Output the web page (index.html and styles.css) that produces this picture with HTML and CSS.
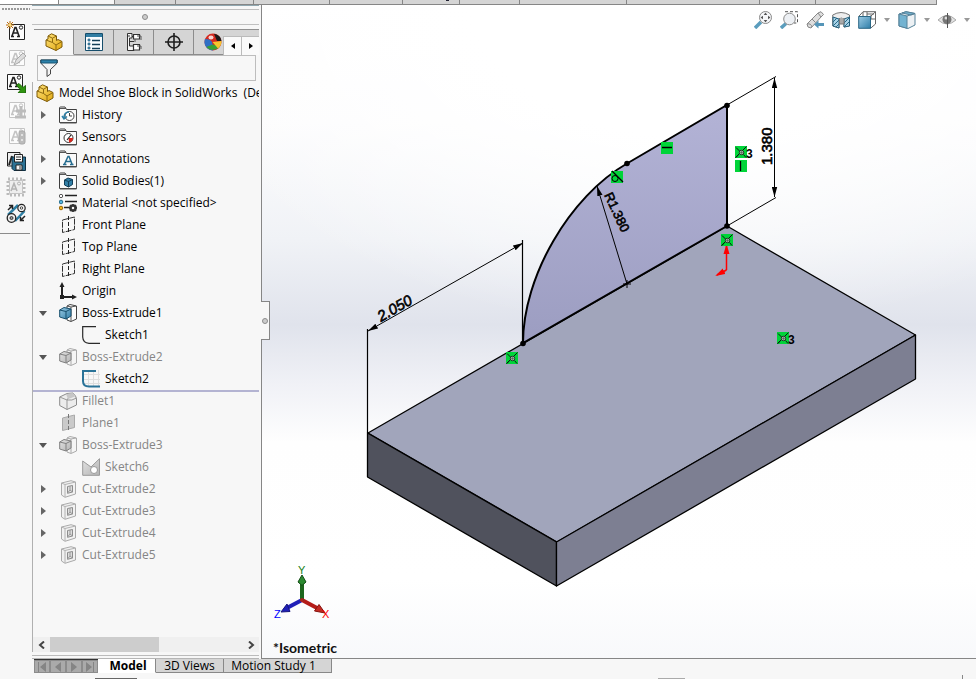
FILE: index.html
```html
<!DOCTYPE html>
<html lang="en">
<head>
<meta charset="utf-8">
<title>Model Shoe Block in SolidWorks</title>
<link rel="stylesheet" href="styles.css">
</head>
<body>
<svg class="defs" aria-hidden="true">
  <defs>
    <linearGradient id="yel" x2="1" y2="1"><stop stop-color="#ffe27a"/><stop offset="1" stop-color="#e0a810"/></linearGradient>
    <linearGradient id="blu" x2="1" y2="1"><stop stop-color="#9ccbe4"/><stop offset="1" stop-color="#2f7ea8"/></linearGradient>
    <linearGradient id="gry" x2="1" y2="1"><stop stop-color="#e2e2e2"/><stop offset="1" stop-color="#b4b4b4"/></linearGradient>
    <symbol id="part" viewBox="0 0 18 18">
      <path d="M1 7V13L11 17.500L17 14V8.500L13 6.500L11.500 7.500V3L6.500 .8L3 3V6Z" fill="url(#yel)" stroke="#7c5a08"/>
      <path d="M1 7L7.500 9.500L11 12L17 8.500M11 12V17.500M3 3L7.500 5.200L11.500 3M7.500 5.200V9.500" fill="none" stroke="#8e6a10"/>
    </symbol>
    <symbol id="folder" viewBox="0 0 18 18"><path d="M.5 16.500V2Q.5 1 1.500 1H6L7.500 3.500H17.500V16.500Z" fill="#fafafa" stroke="#3e3e3e"/><path d="M1 2.500H7M17.500 4V17H1" stroke="#555" fill="none"/></symbol>
    <symbol id="plane" viewBox="0 0 18 18"><path d="M3.500 4L15.500 1V13.500L3.500 16.500Z" fill="none" stroke="#333" stroke-dasharray="6 1"/><path d="M9.500 0V18" stroke="#222" stroke-dasharray="4 2"/></symbol>
    <symbol id="boss" viewBox="0 0 18 18"><path d="M8 2L11 .5L17.500 2V15L12 17.500L8 16Z" fill="#fcfcfc" stroke="#444"/><path d="M12 3V17M12 3L17 2M12 3L8 2" stroke="#555" fill="none"/><path d="M.7 6L5 3.500L12 5V12L7 15L.7 13Z" fill="url(#blu)" stroke="#174f6d"/><path d="M.7 6L7 7.500L12 5M7 7.500V15" stroke="#174f6d" fill="none"/></symbol>
    <symbol id="bossg" viewBox="0 0 18 18"><path d="M8 2L11 .5L17.500 2V15L12 17.500L8 16Z" fill="#f5f5f5" stroke="#aaa"/><path d="M12 3V17M12 3L17 2M12 3L8 2" stroke="#aaa" fill="none"/><path d="M.7 6L5 3.500L12 5V12L7 15L.7 13Z" fill="url(#gry)" stroke="#808080"/><path d="M.7 6L7 7.500L12 5M7 7.500V15" stroke="#808080" fill="none"/></symbol>
    <symbol id="cut" viewBox="0 0 18 18"><path d="M2.500 3L12 .7L16.500 2V14L6 17.300L2.500 15Z" fill="#f1f1f1" stroke="#aaa"/><path d="M2.500 3L6 4.500V17M6 4.500L16.500 2" fill="none" stroke="#b2b2b2"/><path d="M8.500 6.500L13.500 5.500V12L8.500 13.300Z" fill="#ddd" stroke="#8c8c8c"/><path d="M11 6V10L8.500 13M11 10L13.500 12" fill="none" stroke="#999"/></symbol>
    <symbol id="note" viewBox="0 0 20 20"><path d="M3.500 3.500H18.500V18.500H3.500Z" fill="#fcfcfc" stroke="currentColor"/><path d="M6 15L9 6.500H10L13 15M7 12H12M5 15.500H8M11 15.500H14" fill="none" stroke="currentColor" stroke-width="1.600"/><circle cx="15" cy="6.500" r="1.700" fill="none" stroke="currentColor"/></symbol>
    <symbol id="coin" viewBox="0 0 12 12"><path d="M0 0H12V12H0Z" fill="#00d438"/><path d="M.5 11.500L11.500 .5M1 1.500L5 5.500M8.500 8.500L11 11.500M4 8L1 11.500" stroke="#111" stroke-width="1"/><circle cx="6.500" cy="6.500" r="2.200" fill="#bfeec8" stroke="#222"/><path d="M6.500 5V8M5 6.500H8" stroke="#555" stroke-width=".7"/></symbol>
    <marker id="arr" viewBox="0 0 10 6" refX="10" refY="3" markerWidth="10" markerHeight="6" markerUnits="userSpaceOnUse" orient="auto-start-reverse"><path d="M0 .3L10 3L0 5.700Z"/></marker>
    <marker id="rarr" viewBox="0 0 10 6" refX="8" refY="3" markerWidth="10" markerHeight="7" markerUnits="userSpaceOnUse" orient="auto"><path d="M0 0L10 3L0 6Z" fill="#f00"/></marker>
  </defs>
</svg>

<div class="ribbon"><i class="w59 white"></i><i class="w56 light"></i><i class="w61"></i><i class="w78"></i><i class="w76"></i><i class="w73"></i><i class="w57 mark"></i><i class="w60"></i><i class="w107"></i><i class="w133"></i><i class="w56"></i><i class="w121"></i></div>

<main class="work">
  <aside class="annobar">
    <div class="grip"></div>
    <button aria-label="New note"><svg viewBox="0 0 20 20"><use href="#note"/><path d="M4 0V8M0 4H8M1 1L7 7M7 1L1 7" stroke="#b86a0c"/><circle cx="4" cy="4" r="1.500" fill="#ffdb70"/></svg></button>
    <button class="off" aria-label="Edit note"><svg viewBox="0 0 20 20"><use href="#note"/><path d="M8 18L10 13L17 6L20 9L12 16Z" fill="#ddd" stroke="#aaa"/></svg></button>
    <button aria-label="Insert note"><svg viewBox="0 0 20 20"><use href="#note" x="-2" y="-2"/><path d="M10.500 12L13 10.500L17 14.500L19.500 12.500V20H12L14.500 17Z" fill="#2f9410" stroke="#256f10"/></svg></button>
    <button class="off" aria-label="Add note"><svg viewBox="0 0 20 20"><use href="#note"/><path d="M15 7V17M10 12H20M9 18H20" stroke="#bcbcbc" stroke-width="3"/></svg></button>
    <button class="off" aria-label="Lock note"><svg viewBox="0 0 20 20"><use href="#note"/><rect x="13" y="6" width="6" height="13" rx="2" fill="#bbb" stroke="#aaa"/><circle cx="16" cy="10" r="1" fill="#eee"/><circle cx="16" cy="15" r="1" fill="#eee"/></svg></button>
    <button aria-label="Save note"><svg viewBox="0 0 20 20"><path d="M1.500 1.500H14V15H1.500Z" fill="#eee" stroke="#222"/><path d="M3 14L6 5" stroke="#222" stroke-width="2"/><path d="M6 6H19.500V19.500H8L6 17.500Z" fill="#2d7294" stroke="#102f41"/><path d="M8.500 3.500H16.500V11H8.500ZM10 14H16V19H10Z" fill="#f5f5f5" stroke="#222"/><path d="M10 6H15M10 8.500H15M14 15V18" stroke="#333"/></svg></button>
    <button class="off" aria-label="Select note"><svg viewBox="0 0 20 20"><path d="M2 2H18V18H2Z" fill="none" stroke="#bbb" stroke-width="3" stroke-dasharray="2 2"/><path d="M3.500 3.500H16.500V16.500H3.500Z" fill="#eee" stroke="#c4c4c4"/><path d="M5 14L8 6.500L11 14M6 12H10" fill="none" stroke="#b4b4b4" stroke-width="1.600"/><circle cx="13" cy="6.500" r="1.500" fill="none" stroke="#b4b4b4"/></svg></button>
    <button aria-label="Belt and chain"><svg viewBox="0 0 20 20"><path d="M2 12L12 2M9 18L18.500 8" stroke="#2e7fa4" stroke-width="2.500"/><circle cx="5.500" cy="15" r="4.300" fill="#eee" stroke="#222" stroke-width="1.300"/><circle cx="5.500" cy="15" r="1.500" fill="#999" stroke="#333"/><circle cx="15.500" cy="5" r="3.700" fill="#eee" stroke="#222" stroke-width="1.200"/><circle cx="15.500" cy="5" r="1.200" fill="#fff" stroke="#444"/><path d="M2 7L6 3M3 2.500H6.500V6M19 13L15 17M14.500 14V17.500H18" fill="none" stroke="#222" stroke-width="1.500"/></svg></button>
    <hr>
  </aside>

  <section class="panel">
    <div class="handle"><span class="knob"></span></div>
    <div class="ptabs">
      <button class="ptab on" aria-label="Feature tree"><svg viewBox="0 0 18 18"><use href="#part"/></svg></button>
      <button class="ptab" aria-label="Properties"><svg viewBox="0 0 18 18"><path d="M.5 .5H17.500V17.500H.5Z" fill="#f9fcff" stroke="#174e6c"/><path d="M1 1H17V4H1Z" fill="#317da3"/><path d="M3 6H5V8H3ZM3 10H5V12H3ZM3 14H5V16H3Z" fill="#5aa6cb" stroke="#174e6c" stroke-width=".6"/><path d="M7 7.500H15M7 11.500H15M7 15.500H15" stroke="#123e57" stroke-width="1.500"/></svg></button>
      <button class="ptab" aria-label="Configurations"><svg viewBox="0 0 18 18"><path d="M2.500 .5H7V5H4.500V13H9V17.500H2.500Z" fill="#f6f6f6" stroke="#333"/><path d="M2.500 3H5M5 8.500H9M9 3.500H7" stroke="#333"/><path d="M8.500 1.500H14.500V6H8.500ZM8.500 11.500H14.500V17H8.500Z" fill="#fff" stroke="#333" stroke-width="1.200"/><path d="M10 6V9M12 3H16V7M12 13H16V16" fill="none" stroke="#555"/></svg></button>
      <button class="ptab" aria-label="Dimension expert"><svg viewBox="0 0 18 18"><circle cx="9" cy="9" r="6" fill="none" stroke="#1e1e1e" stroke-width="1.600"/><path d="M9 0V18M0 9H18" stroke="#1e1e1e" stroke-width="1.600"/></svg></button>
      <button class="ptab app" aria-label="Appearances"><svg viewBox="0 0 18 18"><circle cx="9" cy="9" r="8.500" fill="#d52a20"/><path d="M1 6Q8 6 8.500 11L9 17.500A8.500 8.500 0 0 1 1 6Z" fill="#2f6fc5"/><path d="M2.500 14L8.500 11.500L16 13A8.500 8.500 0 0 1 2.500 14Z" fill="#38a034"/><path d="M8.500 9L17.500 8Q17.500 13 14 15.500Z" fill="#f5c52d"/><path d="M10 .7Q17 2 17.500 8L13 8Z" fill="#1b1b1b"/><ellipse cx="7" cy="4.500" rx="2.500" ry="2" fill="#fff" opacity=".8"/></svg></button>
      <div class="pscroll"><button aria-label="Previous tabs"><svg viewBox="0 0 6 8"><path d="M5 1V7L1 4Z"/></svg></button><button aria-label="Next tabs"><svg viewBox="0 0 6 8"><path d="M1 1V7L5 4Z"/></svg></button></div>
    </div>
    <label class="filter"><svg viewBox="0 0 18 18"><path d="M.7 1V4L7 10.500V17.500L10.500 15V10.500L17.300 4V1Z" fill="#f3f3f3" stroke="#444"/><path d="M1 1H17V4H1Z" fill="#2d82aa" stroke="#195572"/></svg><input aria-label="Filter tree"></label>

    <ul class="tree">
      <li class="root"><svg viewBox="0 0 18 18"><use href="#part"/></svg><span>Model Shoe Block in SolidWorks&nbsp; (Default)</span></li>
      <li><button class="tw" aria-label="Expand"></button><svg viewBox="0 0 18 18"><use href="#folder"/><circle cx="10.500" cy="10" r="4.500" fill="#fff" stroke="#444"/><path d="M10.500 7V10H13" fill="none" stroke="#444"/><path d="M5 12Q5 6 10 6M3 10L5 13L8 10.500" fill="none" stroke="#2c7fa6" stroke-width="1.500"/></svg><span>History</span></li>
      <li><i class="tw"></i><svg viewBox="0 0 18 18"><use href="#folder"/><circle cx="9.500" cy="10" r="4.500" fill="#fff" stroke="#333"/><path d="M9.500 10L14 10A4.500 4.500 0 0 1 10 14.500Z" fill="#d8261c"/><path d="M8 12L12 7" stroke="#222" stroke-width="1.200"/></svg><span>Sensors</span></li>
      <li><button class="tw" aria-label="Expand"></button><svg viewBox="0 0 18 18"><use href="#folder"/><path d="M5.500 14L9 6.500H10L13 14M7 11.500H11.500M4 14.500H7.500M11 14.500H14.500" fill="none" stroke="#266d90" stroke-width="1.500"/></svg><span>Annotations</span></li>
      <li><button class="tw" aria-label="Expand"></button><svg viewBox="0 0 18 18"><use href="#folder"/><path d="M5.500 8L9 6L13.500 7.500V12.500L9.500 15L5.500 13Z" fill="#317fa7" stroke="#123f59"/><path d="M5.500 8L9.500 9.500L13.500 7.500M9.500 9.500V15" fill="none" stroke="#123f59"/></svg><span>Solid Bodies(1)</span></li>
      <li><i class="tw"></i><svg viewBox="0 0 18 18"><path d="M6 1.500H18M6 7.500H18M5 13.500H18" stroke="#222" stroke-width="1.600"/><circle cx="2" cy="2" r="1.700" fill="#fff" stroke="#555"/><circle cx="2" cy="8" r="1.800" fill="#54b4df" stroke="#246d8c"/><circle cx="2" cy="14" r="1.800" fill="#f1b41a" stroke="#98660a"/><circle cx="14" cy="14" r="2.500" fill="#f7f7f7" stroke="#333" stroke-width="2.500"/><path d="M14 10V12M14 16V18M10 14H12M16 14H18M11 11L12 12M16 16L17 17M17 11L16 12M12 16L11 17" stroke="#333" stroke-width="1.500"/></svg><span>Material &lt;not specified&gt;</span></li>
      <li><i class="tw"></i><svg viewBox="0 0 18 18"><use href="#plane"/></svg><span>Front Plane</span></li>
      <li><i class="tw"></i><svg viewBox="0 0 18 18"><use href="#plane"/></svg><span>Top Plane</span></li>
      <li><i class="tw"></i><svg viewBox="0 0 18 18"><use href="#plane"/></svg><span>Right Plane</span></li>
      <li><i class="tw"></i><svg viewBox="0 0 18 18"><path d="M3 3V15H15" fill="none" stroke="#222" stroke-width="2"/><path d="M3 0L.5 5H5.500ZM18 15L13 12.500V17.500ZM1 13H5V17H1Z" fill="#222"/></svg><span>Origin</span></li>
      <li><button class="tw open" aria-label="Collapse"></button><svg viewBox="0 0 18 18"><use href="#boss"/></svg><span>Boss-Extrude1</span></li>
      <li class="sub"><svg viewBox="0 0 18 18"><path d="M14 .7H.7V11Q1 17 7 17.300H18" fill="none" stroke="#2a2a2a" stroke-width="1.200"/></svg><span>Sketch1</span></li>
      <li class="dim"><button class="tw open" aria-label="Collapse"></button><svg viewBox="0 0 18 18"><use href="#bossg"/></svg><span>Boss-Extrude2</span></li>
      <li class="sub"><svg viewBox="0 0 18 18"><path d="M6.500 0V17M11.500 0V17M16.500 0V17M1 4.500H18M1 9.500H18M1 13.500H18" stroke="#dedede"/><path d="M14 1H1V11Q1 16.500 7 16.500H18" fill="none" stroke="#2a7398" stroke-width="2"/></svg><span>Sketch2</span></li>
      <li class="dim rollback"><i class="tw"></i><svg viewBox="0 0 18 18"><path d="M.7 5L8 1.500L14 1Q17 3 17.500 7V13L8 17.500L.7 13.500Z" fill="#ececec" stroke="#8c8c8c"/><path d="M.7 5L8 8V17.500M8 8Q10 4 14 1M8 8Q13 9 17.500 6" fill="none" stroke="#999"/><path d="M7 2L14 1L17 4L12 6L9 7Z" fill="#c7c7c7"/></svg><span>Fillet1</span></li>
      <li class="dim"><i class="tw"></i><svg viewBox="0 0 18 18"><path d="M3.500 4L15.500 1V13.500L3.500 16.500Z" fill="#cacaca" stroke="#aaa"/><path d="M9.500 0V18" stroke="#777" stroke-dasharray="4 2"/></svg><span>Plane1</span></li>
      <li class="dim"><button class="tw open" aria-label="Collapse"></button><svg viewBox="0 0 18 18"><use href="#bossg"/></svg><span>Boss-Extrude3</span></li>
      <li class="sub dim"><svg viewBox="0 0 18 18"><path d="M.7 3L9 9L17.500 .7V17.300H.7Z" fill="url(#gry)" stroke="#999"/><circle cx="12" cy="12" r="3.500" fill="#fff" stroke="#999"/></svg><span>Sketch6</span></li>
      <li class="dim"><button class="tw" aria-label="Expand"></button><svg viewBox="0 0 18 18"><use href="#cut"/></svg><span>Cut-Extrude2</span></li>
      <li class="dim"><button class="tw" aria-label="Expand"></button><svg viewBox="0 0 18 18"><use href="#cut"/></svg><span>Cut-Extrude3</span></li>
      <li class="dim"><button class="tw" aria-label="Expand"></button><svg viewBox="0 0 18 18"><use href="#cut"/></svg><span>Cut-Extrude4</span></li>
      <li class="dim"><button class="tw" aria-label="Expand"></button><svg viewBox="0 0 18 18"><use href="#cut"/></svg><span>Cut-Extrude5</span></li>
    </ul>

    <div class="hscroll"><button aria-label="Scroll left"><svg viewBox="0 0 8 8"><path d="M6 .5L2 4L6 7.500"/></svg></button><div class="track"><div class="thumb"></div></div><button aria-label="Scroll right"><svg viewBox="0 0 8 8"><path d="M2 .5L6 4L2 7.500"/></svg></button></div>
    <div class="split"></div>
  </section>

  <section class="view">
    <svg class="scene" viewBox="262 5 714 653" role="img" aria-label="Isometric model view">
      <defs>
        <linearGradient id="sk" x1="0" y1="0" x2="0" y2="1"><stop stop-color="#b3b3d6"/><stop offset="1" stop-color="#9c9dc1"/></linearGradient>
      </defs>
      <g stroke="#000" stroke-width="1.300" stroke-linejoin="round">
        <path d="M368 433L727 226L915.500 335L557 542Z" fill="#a1a5bb"/>
        <path d="M367.500 433L556.500 542V586L367.500 477Z" fill="#50525d"/>
        <path d="M556.500 542L915.500 335V379L556.500 586Z" fill="#7d7f92"/>
      </g>
      <path d="M523 343C523 276.500 569.600 196.400 627 163.500L727 105V226Z" fill="url(#sk)" stroke="#000" stroke-width="2"/>
      <g stroke="#000" fill="none">
        <path d="M367.500 329V433M522.500 240V343" stroke-width="1.200"/>
        <path d="M368 331L523 243" marker-start="url(#arr)" marker-end="url(#arr)"/>
        <path d="M774.500 78V197" marker-start="url(#arr)" marker-end="url(#arr)"/>
        <path d="M627 284L597 186" marker-end="url(#arr)"/>
        <path d="M727 105L776 76.500M727 226L776 197.500M623 284H631M627 280V288"/>
      </g>
      <g><circle cx="523" cy="343.500" r="2.800"/><circle cx="727" cy="226" r="2.800"/><circle cx="727" cy="105.500" r="2.800"/><circle cx="627" cy="163.500" r="2.800"/></g>
      <g class="dims">
        <text class="slant" transform="translate(381 322) rotate(-30)">2.050</text>
        <text transform="translate(772 165) rotate(-90)">1.380</text>
        <text class="radius" transform="translate(604 195) rotate(65)">R1.380</text>
      </g>
      <g stroke="#f00" stroke-width="1.500" fill="none"><path d="M726.500 270V246" marker-end="url(#rarr)"/><path d="M726.500 270L717 275" marker-end="url(#rarr)"/></g>
      <use href="#coin" x="735" y="146" width="12" height="12"/>
      <use href="#coin" x="721" y="234" width="12" height="12"/>
      <use href="#coin" x="506" y="352" width="12" height="12"/>
      <use href="#coin" x="777" y="332" width="12" height="12"/>
      <path d="M661 142H673V154H661ZM735 160H747V172H735ZM611 171H623V183H611Z" fill="#00d438"/>
      <path d="M662 147.500H672M740.500 161V171M612 171L623 182" stroke="#000" stroke-width="1.300"/>
      <circle cx="615" cy="178.500" r="3" fill="none" stroke="#000"/>
      <g class="count"><text x="746" y="158">3</text><text x="788" y="344">3</text></g>
      <g stroke-linejoin="round">
        <path d="M302 600L285 609" stroke="#2020b8" stroke-width="4"/><path d="M281 612L287 604L290 611.500Z" fill="#2020b8" stroke="#15157d"/>
        <path d="M302 600L317 608" stroke="#b51c18" stroke-width="4"/><path d="M325 613L319 604.500L314.500 611Z" fill="#c32a22" stroke="#86110d"/>
        <path d="M302 601V583" stroke="#1d661d" stroke-width="4"/><path d="M302 575L306 582L302 585.500L298 582Z" fill="#2b8a30" stroke="#124c14"/><circle cx="302" cy="600" r="2" fill="#a22"/>
      </g>
      <g class="axes"><text x="298" y="574" fill="#158015">Y</text><text x="322" y="618" fill="#f00">X</text><text x="274" y="618" fill="#00f">Z</text></g>
      <text class="orient" x="273" y="653">*Isometric</text>
    </svg>
    <button class="flyout" aria-label="Collapse panel"><span class="knob"></span></button>
    <nav class="hud">
      <button aria-label="Zoom to fit"><svg viewBox="0 0 18 18"><path d="M1 17L7 11" stroke="#5b9dbd" stroke-width="3.500"/><circle cx="11.500" cy="6.500" r="6" fill="#f6f7f9" stroke="#888"/><path d="M11.500 1.500L13.300 4H9.700ZM11.500 11.500L13.300 9H9.700ZM6.500 6.500L9 4.800V8.200ZM16.500 6.500L14 4.800V8.200Z" fill="#555"/></svg></button>
      <button aria-label="Zoom to area"><svg viewBox="0 0 18 18"><path d="M5 .7H17.500V12H14" fill="none" stroke="#555" stroke-dasharray="3 2"/><path d="M1 17L6 12.500" stroke="#5b9dbd" stroke-width="3.500"/><circle cx="9.500" cy="8" r="5.800" fill="#edf0f4" stroke="#8b8b8b"/></svg></button>
      <button aria-label="Previous view"><svg viewBox="0 0 18 18"><path d="M1 13L12 2L15 .7L17.500 3.500L15 6L5 17Q1 17 1 13Z" fill="#dedede" stroke="#888"/><path d="M1 13Q5 12 6 16M6 8L9.500 11.500M12 2L15 6" fill="none" stroke="#888"/><path d="M8 13.500L12.500 9.500V12H18V15H12.500V17.500Z" fill="#5595b8"/></svg></button>
      <button aria-label="Section view"><svg viewBox="0 0 18 18"><path d="M.7 4Q9-1 17.500 4V15L12 16V8Q9 6 7 8V17L.7 15Z" fill="#eee" stroke="#777"/><path d="M1 6L7 8V17L1 15ZM12 8L17.500 6V15L12 16Z" fill="#a9d2e6" stroke="#27617e"/><path d="M1 11L5 7M1 15L7 9M4 16L7 13M12 12L17 7M12 16L17 11" stroke="#286987"/><path d="M7.500 7V13H12V7" fill="#aaa" stroke="#777"/></svg></button>
      <button aria-label="View orientation"><svg viewBox="0 0 18 18"><path d="M5 .7H17.500V13M.7 5.500L5 .7M12.500 5.500L17.500 .7M12.500 17.300L17.500 13M9 1V5M13 4V8H17M5 1V5M9 3H16" fill="none" stroke="#666"/><path d="M.7 5.500H12.500V17.300H.7Z" fill="url(#blu)" stroke="#2b6785"/></svg></button>
      <i class="caret"></i>
      <button aria-label="Display style"><svg viewBox="0 0 18 18"><path d="M1 3L8 .7L17 2.500V14L10 17.500L1 15Z" fill="#edf1f4" stroke="#568299"/><path d="M1 3L9 5V17.300L1 15ZM4 2L8 .7L17 2.500L13 4Z" fill="#73b3d1" stroke="#568299"/><path d="M9 5L17 2.500" stroke="#568299"/></svg></button>
      <i class="caret"></i>
      <button aria-label="Hide or show items"><svg viewBox="0 0 18 18"><path d="M0 9Q9 0 18 9Q9 17 0 9Z" fill="#e4e4e4" stroke="#aaa"/><circle cx="9" cy="8.500" r="4.500" fill="#777"/><circle cx="8" cy="7" r="1.500" fill="#ddd"/><path d="M9.500 2V17" stroke="#555"/></svg></button>
      <i class="caret"></i>
    </nav>
  </section>
</main>

<footer class="bottom">
  <div class="steps">
    <button aria-label="First tab"><svg viewBox="0 0 10 10"><path d="M1 0H2V10H1ZM9 0V10L3 5Z"/></svg></button><button aria-label="Previous tab"><svg viewBox="0 0 10 10"><path d="M8 0V10L2 5Z"/></svg></button><button aria-label="Next tab"><svg viewBox="0 0 10 10"><path d="M2 0V10L8 5Z"/></svg></button><button aria-label="Last tab"><svg viewBox="0 0 10 10"><path d="M8 0H9V10H8ZM1 0V10L7 5Z"/></svg></button>
  </div>
  <button class="mtab on">Model</button><button class="mtab views">3D Views</button><button class="mtab motion">Motion Study 1</button>
  <i class="edge"></i>
</footer>
</body>
</html>
```
FILE: styles.css
```css
* { box-sizing: border-box; }
html, body { height: 100%; margin: 0; }
body {
  display: grid;
  grid-template-rows: 5px minmax(0, 1fr) 20px;
  background: #f7f7f7;
  color: #000;
  font: 12px/16px "Open Sans", "Noto Sans", sans-serif;
  overflow: hidden;
}
button { margin: 0; padding: 0; border: 0; background: none; font: inherit; color: inherit; }
svg { display: block; }
.defs { position: absolute; width: 0; height: 0; }

.ribbon { display: flex; background: #fff; }
.ribbon i { background: #d5d5d5; border-right: 1px solid #868686; border-bottom: 1px solid #868686; }
.ribbon .white { background: #fff; }
.ribbon .light { background: #f7f7f7; }
.ribbon .mark { background: linear-gradient(#223, #223) 43px 0 / 3px 1px no-repeat #d5d5d5; }
.w56 { width: 56px; } .w57 { width: 57px; } .w59 { width: 59px; } .w60 { width: 60px; }
.w61 { width: 61px; } .w73 { width: 73px; } .w76 { width: 76px; } .w78 { width: 78px; }
.w107 { width: 107px; } .w133 { width: 133px; } .w121 { width: 121px; }

.work { display: grid; grid-template-columns: 32px 229px minmax(0, 1fr); min-height: 0; }

.annobar { display: flex; flex-direction: column; align-items: center; gap: 6px; }
.annobar button { color: #222; width: 20px; height: 20px; }
.annobar button.off { color: #c4c4c4; }
.annobar svg { width: 20px; height: 20px; }
.grip { width: 28px; height: 2px; margin: 3px 0 5px; background: repeating-linear-gradient(90deg, #999 0 2px, transparent 2px 3px); }
.annobar hr { width: 30px; margin: 4px 2px 0 0; border: 0; border-top: 1px solid #8c8c8c; align-self: flex-start; }

.panel { display: flex; flex-direction: column; min-height: 0; padding-right: 2px; }
.handle { height: 20px; flex: none; border-top: 1px solid #8fa7b0; border-bottom: 1px solid #c0c0c0; display: grid; place-items: center; background: linear-gradient(#bebebe, #bebebe) 0 3px / 100% 1px no-repeat; padding: 4px 2px 0 0; }
.knob { width: 6px; height: 6px; border: 1px solid #8c8c8c; border-radius: 50%; background: #ccc; }
.ptabs { display: flex; flex: none; height: 26px; margin: 4px 0 0 2px; border-top: 1px solid #909090; background: #d5d5d5; overflow: hidden; }
.ptab { flex: none; width: 40px; display: grid; place-items: center; border-right: 1px solid #8c8c8c; border-bottom: 1px solid #8c8c8c; }
.ptab svg { width: 18px; height: 18px; }
.ptab.on { background: #f7f7f7; border-bottom-color: #f7f7f7; }
.ptab.app { width: 29px; border-right: 0; padding-left: 9px; }
.pscroll { display: flex; flex: 1; margin-top: 6px; border-top: 1px solid #bbb; background: #fafafa; }
.pscroll button { flex: 1; display: grid; place-items: center; border-left: 1px solid #bbb; }
.pscroll svg { width: 6px; height: 8px; }
.filter { display: flex; flex: none; align-items: center; height: 26px; margin: 0 3px 1px 5px; padding-left: 2px; border: 1px solid #bdbdbd; }
.filter svg { width: 18px; height: 18px; }
.filter input { flex: 1; min-width: 0; border: 0; background: none; font: inherit; outline: 0; }

.tree { list-style: none; margin: 0; padding: 0; flex: 1; min-height: 0; border-left: 1px solid #b0b0b0; overflow: hidden; }
.tree li { display: flex; align-items: center; height: 22px; padding-left: 6px; white-space: nowrap; gap: 5px; overflow: hidden; }
.tree svg { flex: none; width: 18px; height: 18px; }
.tree .root { padding-left: 3px; }
.tree .sub { padding-left: 49px; }
.tree .dim { color: #858585; }
.tree .rollback { box-shadow: inset 0 2px #b4b4d2; }
.tw { flex: none; width: 15px; height: 12px; }
button.tw { display: flex; align-items: center; padding-left: 2px; }
button.tw::before { content: ""; border: 4px solid transparent; border-left: 5px solid #666; border-right: 0; }
button.tw.open { padding-left: 0; }
button.tw.open::before { border: 4px solid transparent; border-top: 5px solid #555; border-bottom: 0; }

.hscroll { display: flex; flex: none; height: 15px; background: #f0f0f0; border-left: 1px solid #b0b0b0; }
.hscroll button { width: 17px; display: grid; place-items: center; }
.hscroll svg { width: 8px; height: 8px; fill: none; stroke: #444; stroke-width: 2; }
.track { flex: 1; display: flex; }
.thumb { width: 57%; background: #cdcdcd; }
.split { flex: none; height: 7px; background: linear-gradient(#bbb, #bbb) 0 3px / 100% 1px no-repeat; border-bottom: 1px solid #b5b5b5; }

.view {
  position: relative;
  min-width: 0;
  border-left: 1px solid #868686;
  border-bottom: 1px solid #868686;
  background:
    radial-gradient(ellipse 75% 50% at 60% 0, #fff 40%, transparent),
    linear-gradient(#fff 0, #fcfcfd 18%, #f0f2f6 36%, #e0e3ec 49%, #f0f1f6 58%, #fefefe 67%, #fff 88%, #f8f9fb 100%);
}
.scene { width: 100%; height: 100%; }
.dims text { font: 15px "Liberation Sans", sans-serif; stroke: #000; stroke-width: .6px; }
.dims .slant { font-style: italic; }
.dims .radius { font-size: 13px; }
.count text { font: bold 12px "Liberation Sans", sans-serif; }
.axes text { font: 11px "Liberation Sans", sans-serif; }
.orient { font: bold 14px Lato, sans-serif; fill: #111; }
.flyout { position: absolute; left: -1px; top: 296px; width: 9px; height: 39px; display: grid; place-items: center; background: #f7f7f7; border: 1px solid #868686; border-left: 0; }

.hud { position: absolute; top: 6px; right: 6px; display: flex; align-items: center; gap: 8px; }
.hud button, .hud svg { width: 18px; height: 18px; }
.caret { border: 3px solid transparent; border-top: 4px solid #999; border-bottom: 0; }

.bottom { display: flex; align-items: flex-start; padding-left: 34px; background: linear-gradient(#666, #666) 95px 100% / 42px 1px no-repeat, linear-gradient(#aaa, #aaa) 658px 100% / 27px 1px no-repeat; }
.steps { display: flex; height: 14px; border-top: 1px solid #333; }
.steps button { width: 16px; border: 1px solid #8c8c8c; background: #aaa; display: grid; place-items: center; }
.steps svg { width: 10px; height: 10px; fill: #858585; }
.mtab { height: 14px; line-height: 12px; background: #d5d5d5; border-right: 1px solid #888; border-bottom: 1px solid #888; padding-right: 8px; }
.mtab.on { width: 58px; padding: 0 0 0 3px; background: #fff; font-weight: bold; border-color: #888; border-bottom-color: #fff; }
.views { width: 68px; padding: 0; }
.motion { width: 108px; }
.edge { width: 1px; height: 4px; margin: 16px 13px 0 auto; background: #888; }
```
